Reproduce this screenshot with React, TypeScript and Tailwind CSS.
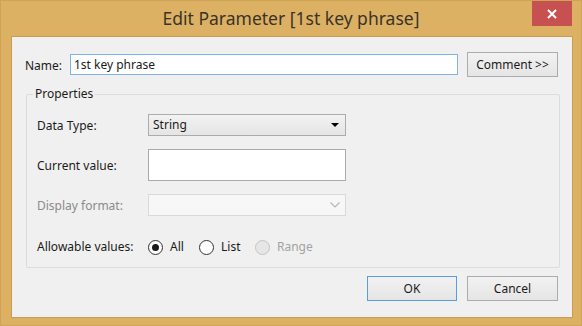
import React from 'react';

type RadioProps = {
  label: string;
  checked?: boolean;
  disabled?: boolean;
  width: string;
};

const Radio: React.FC<RadioProps> = ({ label, checked, disabled, width }) => (
  <label className={`flex items-center gap-[7px] ${width}`}>
    <span
      className={
        disabled
          ? 'w-[15px] h-[15px] rounded-full border border-[#c4c4c4] bg-[#e6e6e6] flex items-center justify-center'
          : 'w-[15px] h-[15px] rounded-full border border-[#333333] bg-white flex items-center justify-center'
      }
    >
      {checked && <span className="w-[7px] h-[7px] rounded-full bg-[#1a1a1a]" />}
    </span>
    <span className={disabled ? 'text-[#a3a3a3]' : ''}>{label}</span>
  </label>
);

const App: React.FC = () => {
  return (
    <div className="w-[582px] h-[326px] bg-[#dcb164] border border-[#cfa355] flex flex-col font-['Noto_Sans','Segoe_UI',sans-serif] text-[12px] text-[#1b1b1b]">
      {/* title bar */}
      <div className="relative h-[35px] flex items-center justify-center text-[17.5px] text-[#3a3328]">
        Edit Parameter [1st key phrase]
        <button className="absolute right-[9px] top-0 w-[40px] h-[25px] bg-[#c75050] flex items-center justify-center">
          <svg width="10" height="10" viewBox="0 0 10 10">
            <path d="M1 1 L9 9 M9 1 L1 9" stroke="#ffffff" strokeWidth="2" />
          </svg>
        </button>
      </div>

      {/* client area */}
      <div className="ml-[10px] mr-[8px] h-[282px] border border-[#c89d52] bg-[#f0f0f0] flex flex-col">
        <div className="mt-[15px] h-[25px] pl-[13px] flex items-center">
          <span className="w-[45px] pt-[2px]">Name:</span>
          <div className="w-[388px] h-[21px] border border-[#7eb4ea] bg-white flex items-center pl-[3px] pt-[1px]">
            1st key phrase
          </div>
          <button className="ml-[9px] w-[91px] h-[25px] border border-[#acacac] bg-gradient-to-b from-[#f2f2f2] to-[#e5e5e5]">
            Comment &gt;&gt;
          </button>
        </div>

        <fieldset className="mt-[9px] ml-[14px] w-[534px] border border-[#dcdcdc] rounded-[2px]">
          <legend className="ml-[6px] px-[2px] leading-[16px]">Properties</legend>
          <div className="pt-[12px] pb-[9px] pl-[10px] flex flex-col">
            <div className="h-[22px] flex items-center">
              <span className="w-[111px] pt-[2px]">Data Type:</span>
              <div className="w-[198px] h-[22px] border border-[#acacac] bg-gradient-to-b from-[#f2f2f2] to-[#e5e5e5] flex items-center justify-between pl-[4px] pr-[6px]">
                <span>String</span>
                <svg width="8" height="4" viewBox="0 0 8 4">
                  <path d="M0 0 H8 L4 4 Z" fill="#000000" />
                </svg>
              </div>
            </div>

            <div className="mt-[13px] h-[32px] flex items-center">
              <span className="w-[111px] pt-[2px]">Current value:</span>
              <div className="w-[198px] h-[32px] border border-[#ababab] bg-white" />
            </div>

            <div className="mt-[13px] h-[22px] flex items-center">
              <span className="w-[111px] pt-[2px] text-[#8a8a8a]">Display format:</span>
              <div className="w-[198px] h-[22px] border border-[#d9d9d9] bg-[#f7f7f7] flex items-center justify-end pr-[5px]">
                <svg width="10" height="6" viewBox="0 0 10 6">
                  <path d="M0.5 0.5 L5 5 L9.5 0.5" stroke="#b5b5b5" strokeWidth="1.2" fill="none" />
                </svg>
              </div>
            </div>

            <div className="mt-[20px] h-[22px] flex items-center">
              <span className="w-[111px]">Allowable values:</span>
              <Radio label="All" checked width="w-[51px]" />
              <Radio label="List" width="w-[56px]" />
              <Radio label="Range" disabled width="w-[80px]" />
            </div>
          </div>
        </fieldset>

        <div className="mt-[8px] pr-[14px] flex justify-end gap-[10px]">
          <button className="w-[90px] h-[25px] border border-[#569de5] bg-gradient-to-b from-[#f2f2f2] to-[#e5e5e5]">
            OK
          </button>
          <button className="w-[91px] h-[25px] border border-[#acacac] bg-gradient-to-b from-[#f2f2f2] to-[#e5e5e5]">
            Cancel
          </button>
        </div>
      </div>
    </div>
  );
};

export default App;
